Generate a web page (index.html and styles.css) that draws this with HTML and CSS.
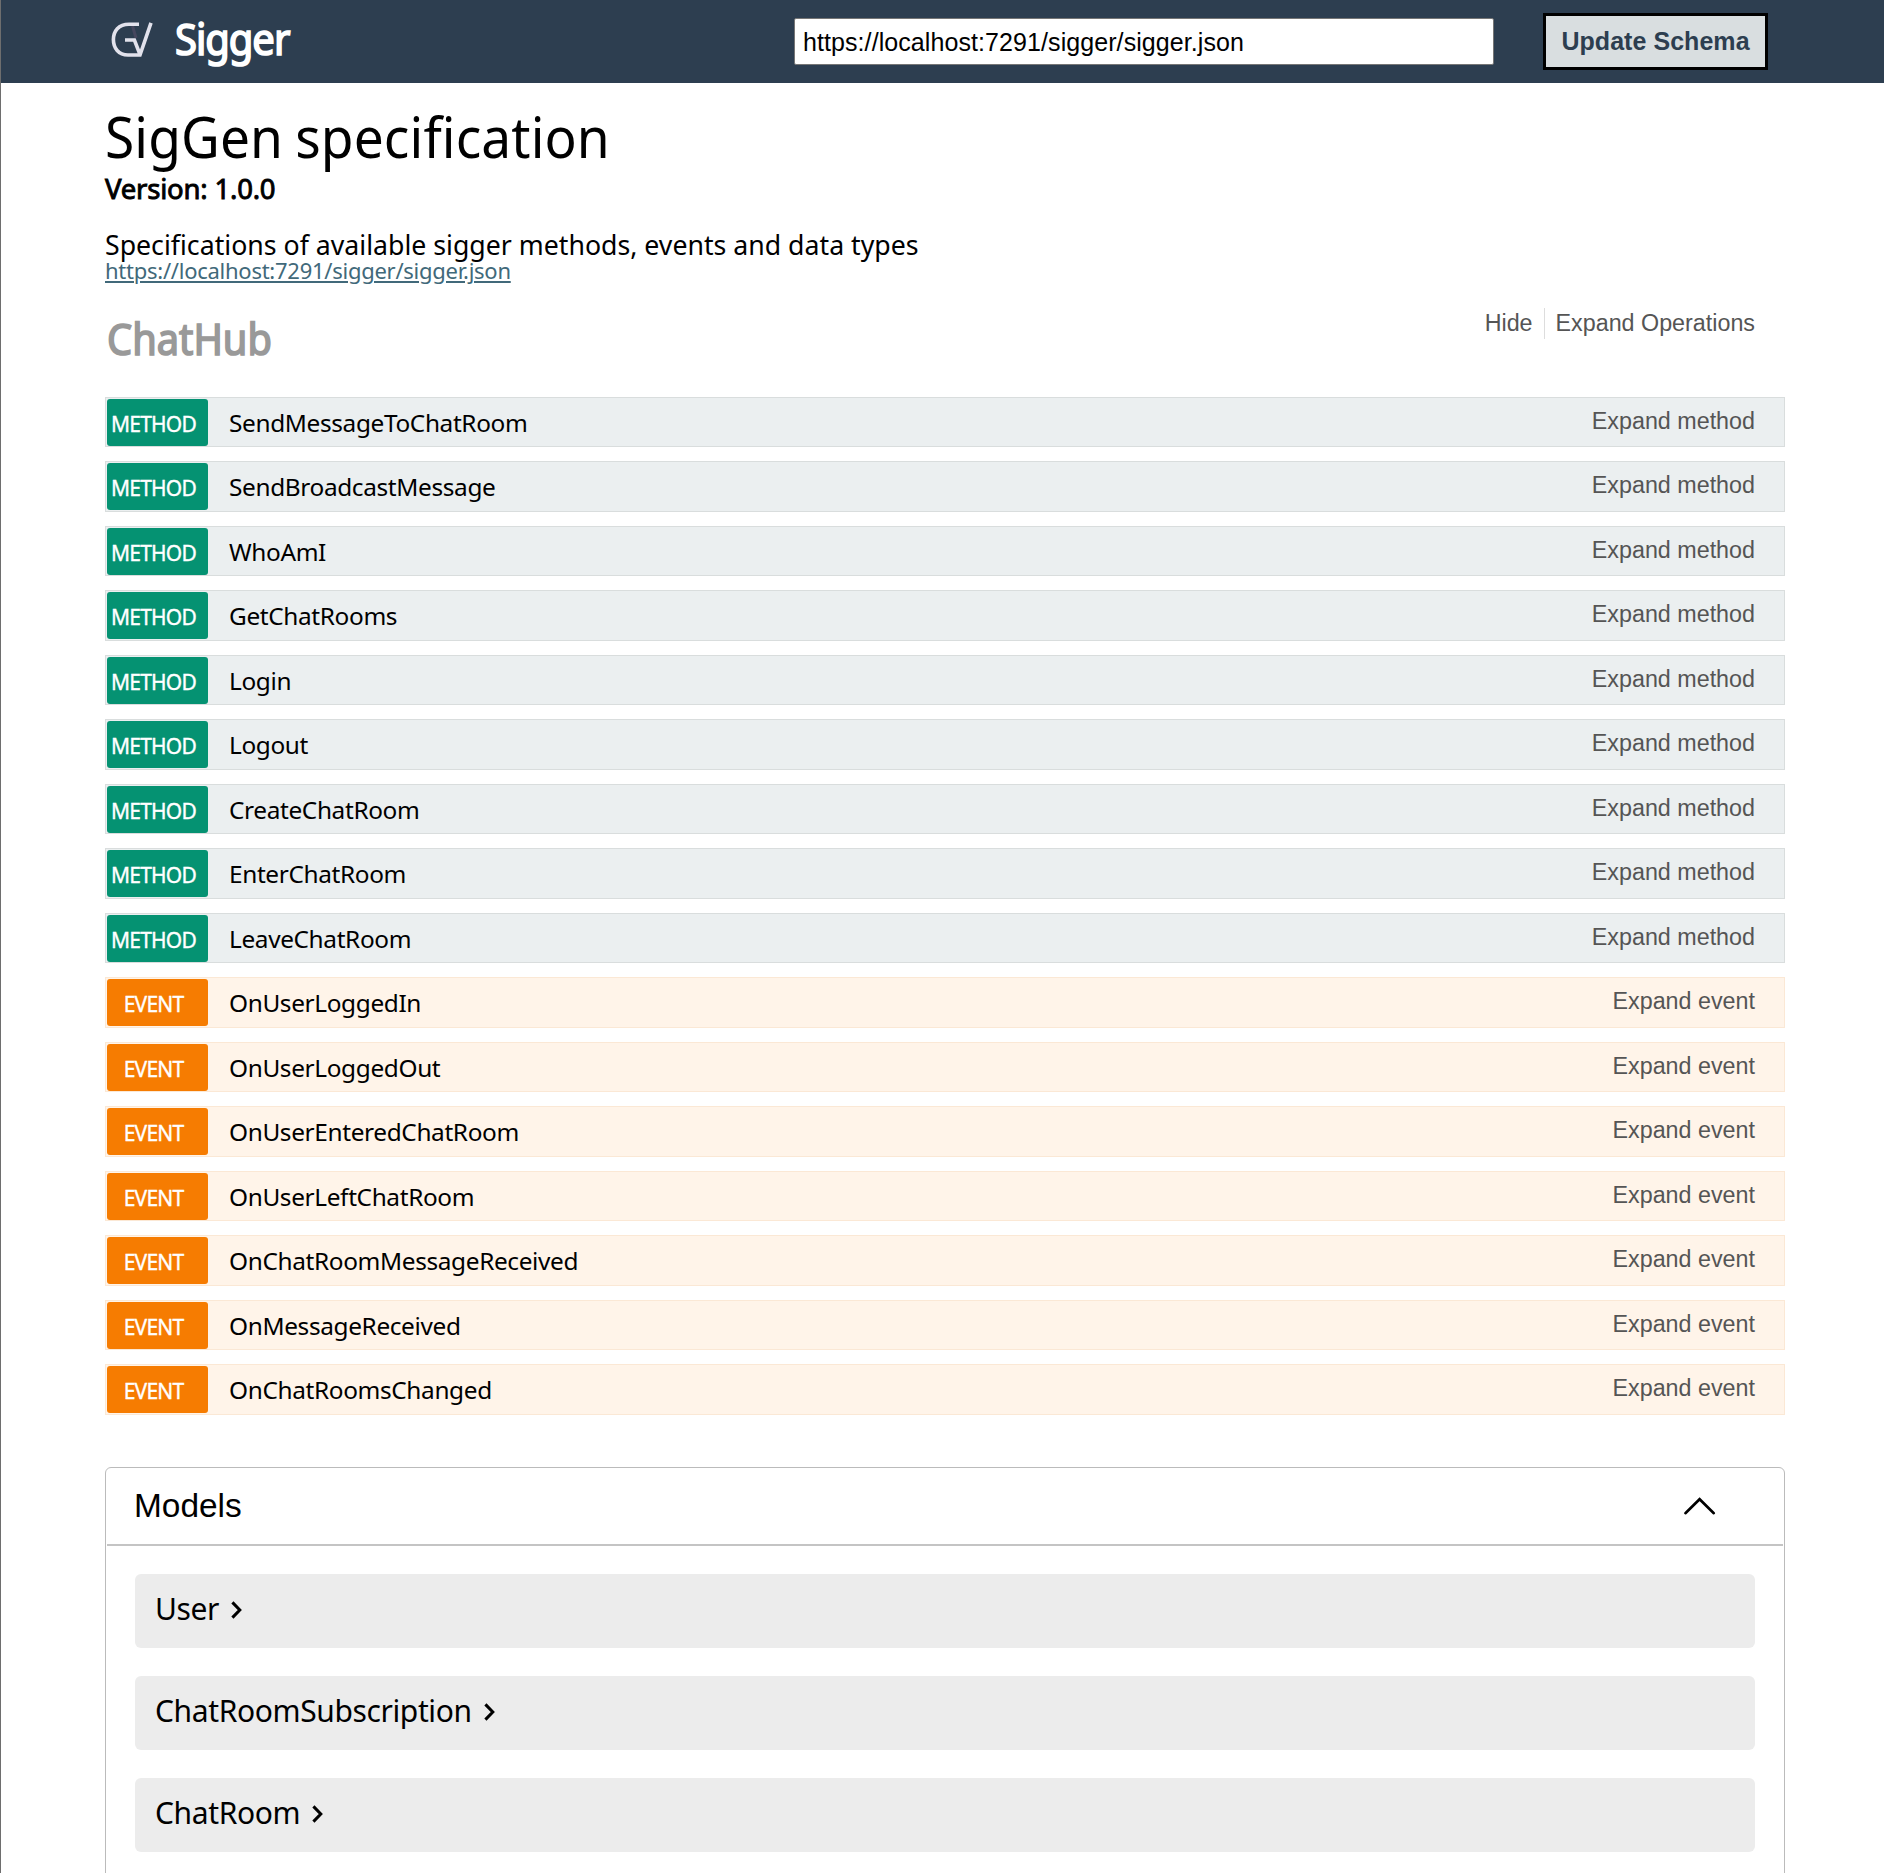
FILE: index.html
```html
<!DOCTYPE html>
<html lang="en">
<head>
<meta charset="utf-8">
<title>Sigger</title>
<link rel="stylesheet" href="styles.css">
</head>
<body>
<header class="topbar">
  <div class="brand">
    <svg class="logo" width="44" height="38" viewBox="0 0 44 38" fill="none" stroke="#e2e2ec" stroke-width="3.6">
      <path d="M21.5 5 25 17" stroke="#46475e" stroke-width="3"/>
      <path d="M28 3.2H18C7.5 3.2 2.4 10 2.4 18.6S7.5 34 17 34H29L40 1.8"/>
      <path d="M14 19H23.4L29 33.5"/>
    </svg>
    <span class="brand-name">Sigger</span>
  </div>
  <input class="url" type="text" value="https://localhost:7291/sigger/sigger.json">
  <button class="update">Update Schema</button>
</header>
<main class="page">
  <h1 class="title">SigGen specification</h1>
  <div class="version">Version: 1.0.0</div>
  <p class="description">Specifications of available sigger methods, events and data types</p>
  <a class="link" href="#">https://localhost:7291/sigger/sigger.json</a>
  <section>
    <div class="hub">
      <h2 class="hub-name">ChatHub</h2>
      <div class="hub-actions"><span class="hide">Hide</span><span class="ops">Expand Operations</span></div>
    </div>
    <ul class="rows" id="rows"></ul>
  </section>
  <section class="models">
    <div class="models-head">
      <span class="models-title">Models</span>
      <svg class="caret" width="34" height="20" viewBox="0 0 34 20" fill="none" stroke="#000" stroke-width="2.6" stroke-linecap="round"><path d="M2.4 17.2 16.6 3.2 30.8 17.2"/></svg>
    </div>
    <div class="model"><span class="model-name">User</span><svg class="chev" width="14" height="20" viewBox="0 0 14 20"><path d="M2.4 2.4 9.8 10 2.4 17.6"/></svg></div>
    <div class="model"><span class="model-name">ChatRoomSubscription</span><svg class="chev" width="14" height="20" viewBox="0 0 14 20"><path d="M2.4 2.4 9.8 10 2.4 17.6"/></svg></div>
    <div class="model"><span class="model-name">ChatRoom</span><svg class="chev" width="14" height="20" viewBox="0 0 14 20"><path d="M2.4 2.4 9.8 10 2.4 17.6"/></svg></div>
  </section>
</main>
<script src="rows.js"></script>
</body>
</html>
```
FILE: rows.js
```js
const methods = ["SendMessageToChatRoom", "SendBroadcastMessage", "WhoAmI", "GetChatRooms", "Login", "Logout", "CreateChatRoom", "EnterChatRoom", "LeaveChatRoom"];
const events = ["OnUserLoggedIn", "OnUserLoggedOut", "OnUserEnteredChatRoom", "OnUserLeftChatRoom", "OnChatRoomMessageReceived", "OnMessageReceived", "OnChatRoomsChanged"];
const row = (kind) => (name) =>
  `<li class="row ${kind}"><span class="badge">${kind.toUpperCase()}</span><span class="row-name">${name}</span><span class="expand">Expand ${kind}</span></li>`;
document.getElementById("rows").innerHTML =
  methods.map(row("method")).join("") + events.map(row("event")).join("");
```
FILE: styles.css
```css
* { box-sizing: border-box; }
html { height: 1873px; overflow: hidden; }
body {
  margin: 0;
  height: 1873px;
  overflow: hidden;
  border-left: 1px solid #6e6e6e;
  background: #fff;
  color: #000;
  font-family: "Noto Sans", sans-serif;
}
.topbar {
  display: flex;
  align-items: center;
  height: 83px;
  padding: 0 116px 0 110px;
  background: #2d3e50;
}
.brand { display: flex; align-items: center; width: 683px; }
.logo { margin: -3px 20px 0 0; }
.brand-name {
  color: #fff;
  font-size: 43px;
  line-height: 60px;
  margin-top: -6px;
  letter-spacing: -1.1px;
  transform: scaleX(0.93);
  transform-origin: left;
  -webkit-text-stroke: 1.7px #fff;
}
.url {
  width: 700px;
  height: 47px;
  margin: 0;
  padding: 1px 8px 0;
  border: 1px solid #767676;
  border-radius: 2px;
  background: #fff;
  font: 25px "Liberation Sans", sans-serif;
  letter-spacing: 0.08px;
}
.update {
  width: 225px;
  height: 57px;
  margin-left: auto;
  padding: 0;
  border: 3px solid #000;
  background: #d9dee0;
  color: #2d3e50;
  font: bold 25px "Liberation Sans", sans-serif;
  letter-spacing: 0.05px;
}
.page { padding: 20px 99px 0 104px; }
.title { width: max-content; margin: 0; font-size: 57px; font-weight: 400; line-height: 66px; letter-spacing: 0.1px; word-spacing: -2px; transform: scaleX(0.935); transform-origin: left; }
.version { margin-top: 4px; font-size: 27.5px; line-height: 32px; letter-spacing: -0.2px; -webkit-text-stroke: 0.9px #000; }
.description { width: max-content; margin: 22px 0 0; font-size: 28px; line-height: 34px; transform: scaleX(0.953); transform-origin: left; }
.link { display: block; width: max-content; margin-top: -1px; font-size: 22px; line-height: 20px; letter-spacing: -0.26px; color: #41697a; text-decoration-thickness: 2px; text-underline-offset: 2px; }
.hub { display: flex; justify-content: space-between; height: 117px; padding: 28px 30px 0 2px; }
.hub-name { margin: 5px 0 0; color: #999; font-size: 43px; font-weight: 400; line-height: 52px; transform: scaleX(0.925); transform-origin: left; -webkit-text-stroke: 1.7px #999; }
.hub-actions { display: flex; height: 31px; font: 23.3px/31px "Liberation Sans", sans-serif; color: #555; }
.hide { padding-right: 11px; border-right: 1px solid #ddd; }
.ops { padding-left: 11px; }
.rows { margin: 0; padding: 0; list-style: none; }
.row {
  display: flex;
  height: 50.47px;
  margin-bottom: 14px;
  padding: 1px;
  border: 1px solid #d9dddd;
  background: #ebeff0;
}
.row.event { border-color: #fbe8d5; background: #fff4e9; }
.badge { width: 101px; height: 47px; padding-right: 8px; border-radius: 3px; background: #059272; color: #fff; font-size: 21px; line-height: 50px; text-align: center; letter-spacing: -0.8px; -webkit-text-stroke: 0.35px #fff; }
.event .badge { background: #f67c01; }
.row-name { margin-left: 21px; font-size: 24.4px; line-height: 47.6px; letter-spacing: -0.36px; }
.expand { margin-left: auto; padding-right: 28px; color: #555; font: 23.3px/45px "Liberation Sans", sans-serif; }
.models { height: 420px; margin-top: 52px; border: 1px solid #bbb; border-radius: 6px; }
.models-head { display: flex; align-items: center; justify-content: space-between; height: 78px; margin: 0 1px 28px; padding: 1px 66px 0 27px; border-bottom: 2px solid #c4c4c4; }
.models-title { font: 33.4px/40px "Liberation Sans", sans-serif; }
.model { display: flex; align-items: flex-start; height: 74px; margin: 0 29px 28px; padding-left: 20px; border-radius: 6px; background: #ececec; }
.model-name { font-size: 30px; line-height: 69px; letter-spacing: -0.38px; }
.chev { margin: 26px 0 0 11px; fill: none; stroke: #000; stroke-width: 3; }
```
